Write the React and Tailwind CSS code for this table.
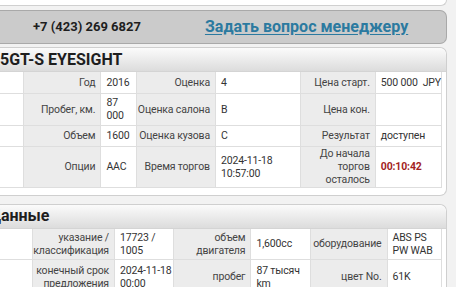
import React from 'react';

// Lot summary rows (the left part of the page is scrolled out of view)
const lotRows = [
  { h: 'h-[21px]', cells: [['Год', '2016'], ['Оценка', '4'], ['Цена старт.', '500 000  JPY']] },
  { h: 'h-[32px]', cells: [['Пробег, км.', '87\n000'], ['Оценка салона', 'B'], ['Цена кон.', '']] },
  { h: 'h-[21px]', cells: [['Объем', '1600'], ['Оценка кузова', 'C'], ['Результат', 'доступен']] },
  {
    h: 'h-[41px]',
    cells: [
      ['Опции', 'AAC'],
      ['Время торгов', '2024-11-18\n10:57:00'],
      ['До начала\nторгов\nосталось', '00:10:42', true],
    ],
  },
];

const auctionRows = [
  {
    h: 'h-[31px]',
    cells: [
      ['указание /\nклассификация', '17723 /\n1005'],
      ['объем\nдвигателя', '1,600cc'],
      ['оборудование', 'ABS PS\nPW WAB'],
    ],
  },
  {
    h: 'h-[34px]',
    cells: [
      ['конечный срок\nпредложения', '2024-11-18\n00:00'],
      ['пробег', '87 тысяч\nkm'],
      ['цвет No.', '61K'],
    ],
  },
];

const Table = ({ rows, cols }) => (
  <table className="table-fixed border-collapse text-[10.5px] leading-[13px] tracking-[-0.15px]">
    <colgroup>
      {cols.map((w, i) => (
        <col key={i} style={{ width: w }} />
      ))}
    </colgroup>
    <tbody>
      {rows.map((row, r) => (
        <tr key={r} className={row.h}>
          <td className="border-b border-r border-[#dedede] bg-white"></td>
          {row.cells.map(([label, value, hot], c) => (
            <React.Fragment key={c}>
              <td className="p-0 border-b border-r border-[#dedede] bg-[#ececec] pr-[5px] text-right align-middle whitespace-pre text-[#444]">
                {label}
              </td>
              <td
                className={`p-0 border-b border-r border-[#dedede] bg-white pl-[5px] align-middle whitespace-pre ${
                  hot ? 'font-bold text-[#a31f1f]' : 'text-[#333]'
                }`}
              >
                {value}
              </td>
            </React.Fragment>
          ))}
        </tr>
      ))}
    </tbody>
  </table>
);

const Panel = ({ title, titleShift, rows, cols, className }) => (
  <div className={`w-[447px] border border-l-0 border-[#cfcfcf] rounded-r-[7px] bg-white pr-[4px] ${className}`}>
    <div className="h-[24px] -mr-[4px] rounded-tr-[7px] bg-gradient-to-b from-[#fbfbfb] to-[#dcdcdc] border-b border-[#d4d4d4] flex items-center overflow-hidden">
      <span className={`text-[16px] font-bold text-[#1e1e1e] whitespace-nowrap ${titleShift}`}>{title}</span>
    </div>
    <Table rows={rows} cols={cols} />
  </div>
);

const App = () => {
  return (
    <div className="w-[456px] h-[287px] overflow-hidden bg-[#f2f2f2] font-['Roboto',sans-serif] text-[#333]">
      {/* previous block, mostly scrolled away */}
      <div className="w-[447px] h-[6px] bg-white border-b border-r border-[#d0d0d0] rounded-br-[7px]"></div>

      {/* contact bar */}
      <div className="mt-[4px] w-[447px] h-[34px] bg-[#cbcbcb] border border-l-0 border-[#a9a9a9] rounded-r-[7px] flex items-center">
        <span className="ml-[33px] text-[13px] font-bold text-[#1e1e1e]">+7 (423) 269 6827</span>
        <span className="ml-[64px] text-[16px] font-bold text-[#2b7aa0] underline underline-offset-2">
          Задать вопрос менеджеру
        </span>
      </div>

      <Panel
        title="5GT-S EYESIGHT"
        titleShift=""
        rows={lotRows}
        cols={[25, 78, 36, 79, 86, 76, 63]}
        className="mt-[3px] pb-[7px]"
      />

      <Panel
        title="Данные"
        titleShift="-ml-[11px]"
        rows={auctionRows}
        cols={[35, 78, 59, 79, 60, 77, 55]}
        className="mt-[8px] pb-[7px]"
      />
    </div>
  );
};

export default App;
